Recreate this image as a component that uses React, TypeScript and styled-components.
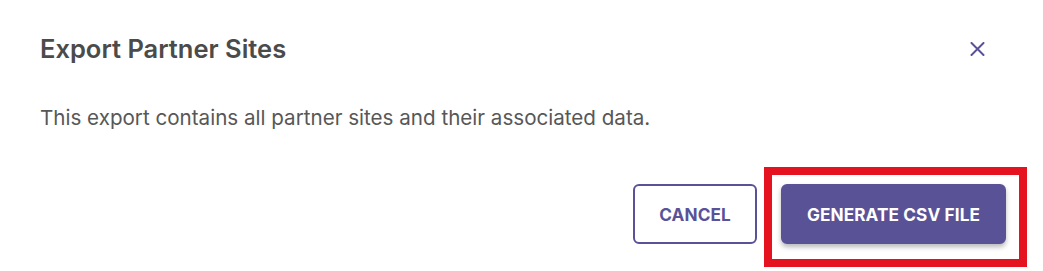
import React from "react";
import styled, { createGlobalStyle } from "styled-components";

const GlobalStyle = createGlobalStyle`
  body {
    margin: 0;
    background: #fff;
    font-family: Inter, "Noto Sans", "Liberation Sans", sans-serif;
  }
`;

const Dialog = styled.div`
  width: 1043px;
  height: 271px;
  box-sizing: border-box;
  padding: 33px 37px 0 40px;
  display: flex;
  flex-direction: column;
  background: #fff;
`;

const Header = styled.div`
  display: flex;
  align-items: center;
  justify-content: space-between;
  height: 32px;
`;

const Title = styled.h2`
  margin: 0;
  font-size: 25.5px;
  line-height: 32px;
  font-weight: 600;
  color: #4b4b4b;
`;

const CloseButton = styled.button`
  width: 32px;
  height: 32px;
  margin-right: 13px;
  border: none;
  background: none;
  padding: 0;
  display: flex;
  align-items: center;
  justify-content: center;
  cursor: pointer;
  color: #5a5296;
`;

const Body = styled.p`
  margin: 39px 0 0;
  font-size: 20.6px;
  line-height: 28px;
  color: #575757;
`;

const Actions = styled.div`
  margin-top: 52px;
  display: flex;
  justify-content: flex-end;
  align-items: center;
  gap: 24px;
`;

const Button = styled.button<{ $primary?: boolean }>`
  height: 60px;
  padding: 0 24px;
  border-radius: 6px;
  font-family: Inter, "Noto Sans", "Liberation Sans", sans-serif;
  font-size: 17.2px;
  font-weight: 700;
  letter-spacing: 0.1px;
  text-transform: uppercase;
  cursor: pointer;
  border: 2px solid #5a5296;
  color: ${(p) => (p.$primary ? "#fff" : "#5a5296")};
  background: ${(p) => (p.$primary ? "#5a5296" : "#fff")};
  box-shadow: ${(p) =>
    p.$primary ? "0 3px 5px rgba(0, 0, 0, 0.28)" : "none"};
`;

const Highlight = styled.div`
  position: relative;

  &::after {
    content: "";
    position: absolute;
    top: -17px;
    left: -17px;
    right: -21px;
    bottom: -23px;
    border: 8px solid #e5121f;
    pointer-events: none;
  }
`;

const App = () => {
  return (
    <>
      <GlobalStyle />
      <Dialog>
        <Header>
          <Title>Export Partner Sites</Title>
          <CloseButton aria-label="close">
            <svg width="15" height="14" viewBox="0 0 15 14">
              <path
                d="M1.5 1 L13.5 13 M13.5 1 L1.5 13"
                stroke="currentColor"
                strokeWidth="2"
                strokeLinecap="round"
              />
            </svg>
          </CloseButton>
        </Header>
        <Body>
          This export contains all partner sites and their associated data.
        </Body>
        <Actions>
          <Button>Cancel</Button>
          <Highlight>
            <Button $primary>Generate CSV File</Button>
          </Highlight>
        </Actions>
      </Dialog>
    </>
  );
};

export default App;
